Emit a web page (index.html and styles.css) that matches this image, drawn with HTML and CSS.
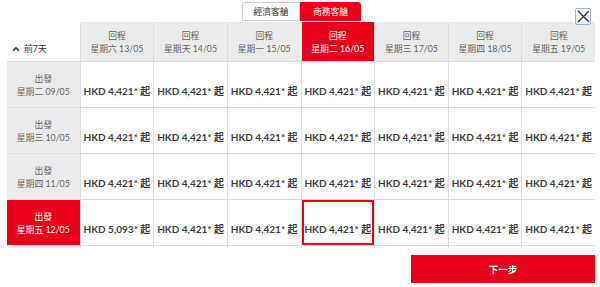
FILE: index.html
```html
<!DOCTYPE html>
<html lang="zh-Hant">
<head>
<meta charset="utf-8">
<link rel="stylesheet" href="styles.css">
</head>
<body>
<div class="page">
  <div class="topbar">
    <div class="tabs">
      <button class="tab">經濟客艙</button>
      <button class="tab tab-active">商務客艙</button>
    </div>
    <button class="close" aria-label="close">
      <svg width="13" height="13" viewBox="0 0 13 13"><path d="M1 1 L12 12 M12 1 L1 12" stroke="#333" stroke-width="1.4" fill="none"/></svg>
    </button>
  </div>
  <div class="gridwrap">
    <div class="grid">
      <div class="corner"><span class="chev"><svg width="8" height="6" viewBox="0 0 8 6"><path d="M1 5 L4 1.8 L7 5" stroke="#333" stroke-width="1.6" fill="none"/></svg></span>前7天</div>
      <div class="hd"><span>回程</span><span>星期六 13/05</span></div>
      <div class="hd"><span>回程</span><span>星期天 14/05</span></div>
      <div class="hd"><span>回程</span><span>星期一 15/05</span></div>
      <div class="hd hd-active"><span>回程</span><span>星期二 16/05</span></div>
      <div class="hd"><span>回程</span><span>星期三 17/05</span></div>
      <div class="hd"><span>回程</span><span>星期四 18/05</span></div>
      <div class="hd"><span>回程</span><span>星期五 19/05</span></div>

      <div class="rh"><span>出發</span><span>星期二 09/05</span></div>
      <div class="c">HKD 4,421* 起</div><div class="c">HKD 4,421* 起</div><div class="c">HKD 4,421* 起</div><div class="c">HKD 4,421* 起</div><div class="c">HKD 4,421* 起</div><div class="c">HKD 4,421* 起</div><div class="c">HKD 4,421* 起</div>

      <div class="rh"><span>出發</span><span>星期三 10/05</span></div>
      <div class="c">HKD 4,421* 起</div><div class="c">HKD 4,421* 起</div><div class="c">HKD 4,421* 起</div><div class="c">HKD 4,421* 起</div><div class="c">HKD 4,421* 起</div><div class="c">HKD 4,421* 起</div><div class="c">HKD 4,421* 起</div>

      <div class="rh"><span>出發</span><span>星期四 11/05</span></div>
      <div class="c">HKD 4,421* 起</div><div class="c">HKD 4,421* 起</div><div class="c">HKD 4,421* 起</div><div class="c">HKD 4,421* 起</div><div class="c">HKD 4,421* 起</div><div class="c">HKD 4,421* 起</div><div class="c">HKD 4,421* 起</div>

      <div class="rh rh-active"><span>出發</span><span>星期五 12/05</span></div>
      <div class="c">HKD 5,093* 起</div><div class="c">HKD 4,421* 起</div><div class="c">HKD 4,421* 起</div><div class="c c-selected">HKD 4,421* 起</div><div class="c">HKD 4,421* 起</div><div class="c">HKD 4,421* 起</div><div class="c">HKD 4,421* 起</div>

      <div class="rh"></div><div class="c"></div><div class="c"></div><div class="c"></div><div class="c"></div><div class="c"></div><div class="c"></div><div class="c"></div>
    </div>
  </div>
  <div class="actions">
    <button class="next">下一步</button>
  </div>
</div>
</body>
</html>
```

FILE: styles.css
```css
* { box-sizing: border-box; }
html, body { margin: 0; padding: 0; background: #fff; }
body {
  font-family: Lato, "Noto Sans CJK TC", sans-serif;
  color: #444;
  width: 600px;
  height: 287px;
  overflow: hidden;
}
.page { padding-left: 7px; padding-right: 5px; }
.topbar {
  position: relative;
  height: 22px;
  padding-top: 2px;
  display: flex;
  padding-left: 235px;
}
.tabs { display: flex; height: 19px; }
.tab {
  font-family: Lato, "Noto Sans CJK TC", sans-serif;
  font-size: 8.8px;
  height: 19px;
  padding: 0;
  margin: 0;
  border: 1px solid #cfcfcf;
  background: #fff;
  color: #333;
  line-height: 17px;
  width: 58px;
  border-radius: 3px 0 0 0;
  cursor: pointer;
}
.tab-active {
  width: 61px;
  background: #e9001b;
  border-color: #e9001b;
  color: #fff;
  border-radius: 0 3px 0 0;
}
.close {
  position: absolute;
  right: 4px;
  top: 8px;
  width: 16px;
  height: 17px;
  padding: 0;
  margin: 0;
  border: 1px solid #8fbde6;
  border-radius: 2px;
  background: #fff;
  display: flex;
  align-items: center;
  justify-content: center;
}
.gridwrap { height: 226px; overflow: hidden; }
.grid {
  display: grid;
  grid-template-columns: repeat(8, minmax(0, 1fr));
  grid-template-rows: 39px repeat(5, 45px);
  column-gap: 1px;
  row-gap: 1px;
  background: #dedede;
  width: 588px;
}
.corner {
  background: #fff;
  display: flex;
  align-items: flex-end;
  padding: 0 0 6px 6px;
  font-size: 8.8px;
  color: #333;
  margin: -1px 0 0 -1px;
  white-space: nowrap;
}
.chev { display: inline-flex; margin-right: 4px; margin-bottom: 3px; }
.hd, .rh {
  background: #ebebeb;
  display: flex;
  flex-direction: column;
  align-items: center;
  justify-content: center;
  font-size: 8.8px;
  line-height: 13px;
  color: #666;
  white-space: nowrap;
}
.hd-active, .rh-active { background: #e9001b; color: #fff; }
.c {
  background: #fff;
  display: flex;
  align-items: center;
  justify-content: center;
  font-size: 10px;
  font-weight: 700;
  color: #3f3f3f;
  white-space: nowrap;
  padding-top: 12px;
}
.c-selected { box-shadow: inset 0 0 0 2px #e9001b; }
.actions { display: flex; justify-content: flex-end; padding-top: 7px; }
.next {
  width: 184px;
  height: 28px;
  border: none;
  background: #e9001b;
  color: #fff;
  font-family: Lato, "Noto Sans CJK TC", sans-serif;
  font-size: 9.5px;
  font-weight: 700;
  padding: 0;
  margin: 0;
}
```
